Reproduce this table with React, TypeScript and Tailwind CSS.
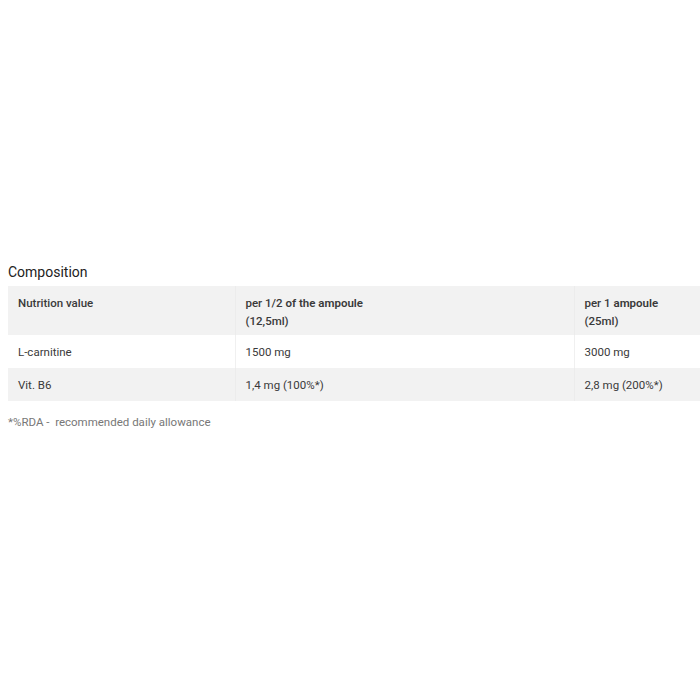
export default function App() {
  return (
    <div className="w-[700px] h-[700px] bg-white overflow-hidden" style={{ fontFamily: "Roboto, 'Liberation Sans', sans-serif" }}>
      <div className="pt-[263px] pl-[8px]">
        <h2 className="text-[14px] leading-[18px] text-[#222] font-normal mb-[5px]">Composition</h2>
        <table className="border-collapse w-[800px] text-[11.5px] leading-[18px] text-[#3a3a3a] table-fixed">
          <colgroup>
            <col className="w-[227px]" />
            <col className="w-[339px]" />
            <col />
          </colgroup>
          <tbody>
            <tr className="bg-[#f2f2f2] h-[49px] align-top">
              <td className="px-[10px] pt-[8px] font-medium border-r border-[#ececec]">Nutrition value</td>
              <td className="px-[10px] pt-[8px] font-medium border-r border-[#ececec]">per 1/2 <span className="font-semibold">of the ampoule</span><br />(12,5ml)</td>
              <td className="px-[10px] pt-[8px] font-medium">per 1 <span className="font-semibold">ampoule</span><br />(25ml)</td>
            </tr>
            <tr className="bg-white h-[33px] align-middle">
              <td className="px-[10px] border-r border-[#f0f0f0]">L-carnitine</td>
              <td className="px-[10px] border-r border-[#f0f0f0]">1500 mg</td>
              <td className="px-[10px]">3000 mg</td>
            </tr>
            <tr className="bg-[#f2f2f2] h-[33px] align-middle">
              <td className="px-[10px] border-r border-[#ececec]">Vit. B6</td>
              <td className="px-[10px] border-r border-[#ececec]">1,4 mg (100%*)</td>
              <td className="px-[10px]">2,8 mg (200%*)</td>
            </tr>
          </tbody>
        </table>
        <p className="mt-[13px] text-[11.5px] leading-[16px] text-[#777]">*%RDA -&nbsp; recommended daily allowance</p>
      </div>
    </div>
  );
}
